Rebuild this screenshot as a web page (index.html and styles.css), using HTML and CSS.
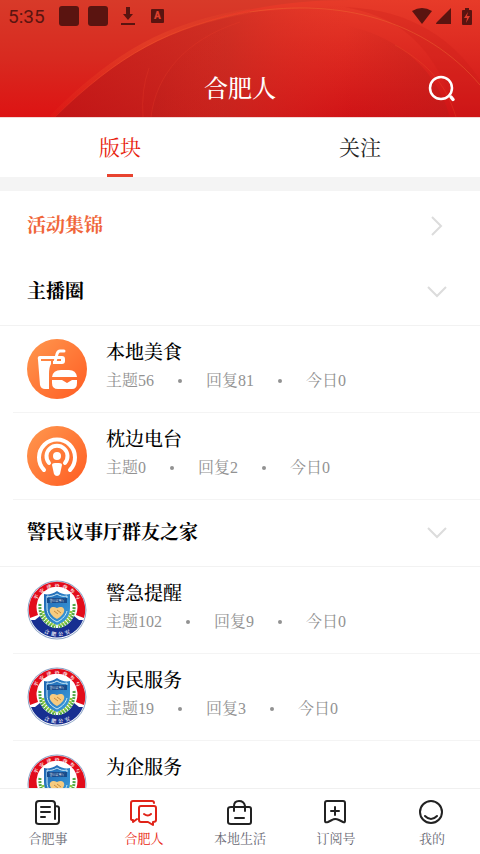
FILE: index.html
```html
<!DOCTYPE html>
<html lang="zh-CN">
<head>
  <meta charset="UTF-8">
  <meta name="viewport" content="width=device-width, initial-scale=1.0">
  <title>合肥人</title>
  <link rel="stylesheet" href="styles.css">
</head>
<body>
  <!-- Shared drawings -->
  <svg class="defs" width="0" height="0" aria-hidden="true">
    <defs>
      <linearGradient id="orange" x1="0" y1="0" x2="1" y2="1">
        <stop offset="0" stop-color="#ff984f"/>
        <stop offset="1" stop-color="#ff5c22"/>
      </linearGradient>
      <linearGradient id="shield" x1="0" y1="0" x2="1" y2="1">
        <stop offset="0" stop-color="#1c62b0"/>
        <stop offset="1" stop-color="#3da0dd"/>
      </linearGradient>
      <path id="arc-top" d="M7.500 30A22.500 22.500 0 0 1 52.500 30"/>
      <path id="arc-bottom" d="M4 30A26 26 0 0 0 56 30"/>
    </defs>
    <symbol id="badge" viewBox="0 0 60 60">
      <circle cx="30" cy="30" r="29.500" fill="#8ba3c6"/>
      <circle cx="30" cy="30" r="28.500" fill="#fff"/>
      <path d="M3 38A28.200 28.200 0 1 1 57 38L49 35A20.500 20.500 0 1 0 11 35Z" fill="#e20c1b"/>
      <path d="M4 40L8 40L13 36C20 52 40 52 47 36L52 40L56 40A28 28 0 0 1 4 40Z" fill="#172f91"/>
      <text class="badge-text"><textPath href="#arc-top" startOffset="50%">平&#160;&#160;安&#160;&#160;建&#160;&#160;设&#160;&#160;我&#160;&#160;参&#160;&#160;与</textPath></text>
      <text class="badge-text"><textPath href="#arc-bottom" startOffset="50%">合&#160;&#160;肥&#160;&#160;公&#160;&#160;安</textPath></text>
      <g fill="none" stroke-width="3" stroke-dasharray="2 1">
        <path d="M13 24C12 35 17 44 29 47" stroke="#4fa646"/>
        <path d="M47 24C48 35 43 44 31 47" stroke="#4fa646"/>
        <path d="M16 31C17 38 21 43 29 45" stroke="#8fc93c"/>
        <path d="M44 31C43 38 39 43 31 45" stroke="#8fc93c"/>
      </g>
      <path d="M30 11C26 14 21 15 17 14V28C17 37 22 42 30 45C38 42 43 37 43 28V14C39 15 34 14 30 11Z" fill="url(#shield)"/>
      <path d="M40 18V16C36 17 33 16 30 14C27 16 23 17 20 16V28C20 35 24 39 30 42C36 39 39 35 40 31" fill="none" stroke="#cdebf8"/>
      <path d="M20 18H40V23H20Z" fill="#174b8b"/>
      <text class="shield-text" x="30" y="22">警民议事厅</text>
      <path d="M30 39C18 32 23 24 30 28C37 24 42 32 30 39Z" fill="#f6cb80"/>
      <path d="M27 31L31 34M30 30L34 33" stroke="#c98b3c" stroke-width="1"/>
    </symbol>
    <symbol id="chevron-down" viewBox="0 0 20 12">
      <path d="M1 1L10 10L19 1" fill="none" stroke="#dcdcdc" stroke-width="2"/>
    </symbol>
  </svg>

  <div class="app">
    <header class="header">
      <svg class="header-bg" viewBox="0 0 480 117" preserveAspectRatio="none" aria-hidden="true">
        <defs>
          <linearGradient id="base" x1="0" y1="0" x2="0" y2="1">
            <stop offset="0" stop-color="#e73b29"/>
            <stop offset="1" stop-color="#d01316"/>
          </linearGradient>
          <linearGradient id="glow" x1="0" y1="0" x2="0" y2="1">
            <stop offset="0" stop-color="#d83a29"/>
            <stop offset="0.500" stop-color="#d82a20"/>
            <stop offset="1" stop-color="#dd1313"/>
          </linearGradient>
          <linearGradient id="dark" x1="0" y1="0" x2="1" y2="0">
            <stop offset="0" stop-color="#b81616" stop-opacity="0.600"/>
            <stop offset="0.400" stop-color="#c22c22" stop-opacity="0.600"/>
            <stop offset="0.700" stop-color="#e33024" stop-opacity="0"/>
          </linearGradient>
          <linearGradient id="inner" x1="0" y1="0" x2="1" y2="0">
            <stop offset="0" stop-color="#b5201c" stop-opacity="0.300"/>
            <stop offset="0.500" stop-color="#df2a20" stop-opacity="0"/>
          </linearGradient>
          <linearGradient id="shade" x1="0" y1="0" x2="1" y2="0">
            <stop offset="0" stop-color="#b51d1a" stop-opacity="0"/>
            <stop offset="1" stop-color="#b51d1a" stop-opacity="0.400"/>
          </linearGradient>
          <linearGradient id="edge" x1="0" y1="1" x2="1" y2="0">
            <stop offset="0" stop-color="#f04a26" stop-opacity="0.200"/>
            <stop offset="0.600" stop-color="#f4522a"/>
            <stop offset="1" stop-color="#f4522a" stop-opacity="0.300"/>
          </linearGradient>
        </defs>
        <rect width="480" height="117" fill="url(#base)"/>
        <path d="M0 0H350C210 0 125 48 55 117H0Z" fill="url(#glow)"/>
        <path d="M55 117C118 55 170 26 250 12L350 5H480V117Z" fill="url(#dark)"/>
        <path d="M52 117C115 54 168 24 250 11" fill="none" stroke="url(#edge)" stroke-width="5" opacity="0.350"/>
        <path d="M55 117C118 55 170 26 250 12" fill="none" stroke="url(#edge)" opacity="0.600"/>
        <path d="M151 117C156 70 195 30 250 18L310 8V117Z" fill="url(#inner)"/>
        <path d="M345 117V25C405 38 438 75 450 117Z" fill="url(#shade)"/>
        <path d="M400 28C432 50 448 85 456 117H480V80C455 42 415 10 345 7C370 12 385 18 400 28Z" fill="#c91a18" opacity="0.250"/>
        <path d="M250 12C340 -2 425 20 480 85" fill="none" stroke="#f07034" opacity="0.400"/>
        <path d="M395 45C430 65 446 85 456 117" fill="none" stroke="#f05b2c" opacity="0.250"/>
        <path d="M143 117Q141 90 149 68M151 117C156 75 185 40 240 22" fill="none" stroke="#e93c27" opacity="0.300"/>
      </svg>

      <div class="status">
        <div class="status-left">
          <span class="time">5:35</span>
          <i class="square"></i>
          <i class="square"></i>
          <svg width="14" height="18" viewBox="0 0 14 18"><path d="M5 0H9V7H12L7 13L2 7H5ZM0 16H14V18H0Z"/></svg>
          <span class="lang">A</span>
        </div>
        <div class="status-right">
          <svg width="20" height="16" viewBox="0 0 20 16"><path d="M0 3Q10-3 20 3L10 16Z"/></svg>
          <svg width="16" height="16" viewBox="0 0 16 16"><path d="M15 0V16H1Q-1 16 1 14Z"/></svg>
          <svg class="battery" width="10" height="17" viewBox="0 0 10 17"><path d="M3 0H7V2H9Q10 2 10 3V16Q10 17 9 17H1Q0 17 0 16V3Q0 2 1 2H3Z"/><path d="M6 4L2 10H5L4 15L8 8H5Z" fill="#dd3b2a"/></svg>
        </div>
      </div>

      <div class="title-bar">
        <h1>合肥人</h1>
        <button class="search" aria-label="搜索">
          <svg width="28" height="28" viewBox="0 0 28 28" fill="none" stroke="#fff"><circle cx="13" cy="13" r="11" stroke-width="2.500"/><path d="M23 22L25 24.500" stroke-width="3.500" stroke-linecap="round"/></svg>
        </button>
      </div>
    </header>

    <div class="tabs">
      <button class="tab active">版块</button>
      <button class="tab">关注</button>
    </div>

    <main class="content">
      <a class="group highlight" href="#">
        <h2>活动集锦</h2>
        <span class="arrow"><svg width="12" height="20" viewBox="0 0 12 20"><path d="M1 1L10 10L1 19" fill="none" stroke="#dcdcdc" stroke-width="2"/></svg></span>
      </a>

      <section>
        <button class="group">
          <h2>主播圈</h2>
          <span class="arrow"><svg width="20" height="12"><use href="#chevron-down"/></svg></span>
        </button>
        <a class="board" href="#">
          <svg class="board-icon" viewBox="0 0 60 60">
            <circle cx="30" cy="30" r="30" fill="url(#orange)"/>
            <path d="M37 12H33Q31 12 30 15L28 23" fill="none" stroke="#fff" stroke-width="3" stroke-linecap="round" stroke-linejoin="round"/>
            <path d="M13 17H35Q38 17 38 20V22Q38 25 35 25H26V22H34V20H14V22H24V25Q22 28 22 35V50H18Q14 50 13 46L11 21Q10 17 13 17Z" fill="#fff"/>
            <path d="M25 38Q26 31 34 31H42Q49 31 50 38Z" fill="#fff"/>
            <path d="M25 41H35L40 44L45 41H50V44Q50 50 45 50H31Q25 50 25 44Z" fill="#fff"/>
          </svg>
          <div class="board-info">
            <h3>本地美食</h3>
            <p><span>主题56</span><span>回复81</span><span>今日0</span></p>
          </div>
        </a>
        <a class="board" href="#">
          <svg class="board-icon" viewBox="0 0 60 60">
            <circle cx="30" cy="30" r="30" fill="url(#orange)"/>
            <g fill="none" stroke="#fff" stroke-width="4" stroke-linecap="round">
              <path d="M17 44A18 18 0 1 1 43 44"/>
              <path d="M22 37A10.500 10.500 0 1 1 38 37"/>
            </g>
            <circle cx="30" cy="30" r="4" fill="#fff"/>
            <path d="M25 39Q25 37 28 37H32Q35 37 35 39L33 48Q32 50 30 50Q28 50 27 48Z" fill="#fff"/>
          </svg>
          <div class="board-info">
            <h3>枕边电台</h3>
            <p><span>主题0</span><span>回复2</span><span>今日0</span></p>
          </div>
        </a>
      </section>

      <section>
        <button class="group">
          <h2>警民议事厅群友之家</h2>
          <span class="arrow"><svg width="20" height="12"><use href="#chevron-down"/></svg></span>
        </button>
        <a class="board" href="#">
          <svg class="board-icon"><use href="#badge"/></svg>
          <div class="board-info">
            <h3>警急提醒</h3>
            <p><span>主题102</span><span>回复9</span><span>今日0</span></p>
          </div>
        </a>
        <a class="board" href="#">
          <svg class="board-icon"><use href="#badge"/></svg>
          <div class="board-info">
            <h3>为民服务</h3>
            <p><span>主题19</span><span>回复3</span><span>今日0</span></p>
          </div>
        </a>
        <a class="board" href="#">
          <svg class="board-icon"><use href="#badge"/></svg>
          <div class="board-info">
            <h3>为企服务</h3>
          </div>
        </a>
      </section>
    </main>

    <nav class="bottom-nav">
      <a href="#">
        <svg viewBox="0 0 26 26"><path d="M20 19V4Q20 1 17 1H4Q1 1 1 4V22Q1 24 4 24H21Q24 24 24 21V8Q24 6 20 6M6 7H15M6 12H15M6 17H10"/></svg>
        <span>合肥事</span>
      </a>
      <a class="active" href="#">
        <svg viewBox="0 0 26 26"><path d="M23 3Q23 1 21 1H2Q0 1 0 3V19Q0 20 2 20V22L6 19M10 6H23Q25 6 25 8V20Q25 22 22 22V25L17 22H10Q8 22 8 20V8Q8 6 10 6ZM13 14Q17 17 20 14"/></svg>
        <span>合肥人</span>
      </a>
      <a href="#">
        <svg viewBox="0 0 26 26"><path d="M4 7H22Q24 7 24 9V22Q24 24 22 24H4Q1 24 1 22V9Q1 7 4 7ZM7 11V6Q7 1 12 1T18 6V11M8 18H17"/></svg>
        <span>本地生活</span>
      </a>
      <a href="#">
        <svg viewBox="0 0 26 26"><path d="M4 1H20Q22 1 22 3V21Q22 23 20 22L16 20Q12 18 9 20L5 22Q2 23 2 21V3Q2 1 4 1ZM12 7V15M8 11H16"/></svg>
        <span>订阅号</span>
      </a>
      <a href="#">
        <svg viewBox="0 0 26 26"><circle cx="12" cy="12" r="11"/><path d="M6 16Q12 22 18 16"/></svg>
        <span>我的</span>
      </a>
    </nav>
  </div>
</body>
</html>
```
FILE: styles.css
```css
* {
  margin: 0;
  padding: 0;
  box-sizing: border-box;
}

body {
  font-family: "Liberation Serif", "Noto Serif CJK SC", "Noto Sans CJK SC", serif;
  background: #fff;
  color: #000;
}

a {
  color: inherit;
  text-decoration: none;
}

button {
  border: none;
  background: none;
  font: inherit;
  color: inherit;
  cursor: pointer;
}

svg {
  display: block;
  flex-shrink: 0;
}

.defs {
  position: absolute;
}

.app {
  display: flex;
  flex-direction: column;
  height: 100vh;
}

/* Header */
.header {
  position: relative;
  flex-shrink: 0;
  padding-bottom: 4px;
  border-bottom: 1px solid #f4d8d6;
}

.header-bg {
  position: absolute;
  top: 0;
  left: 0;
  width: 100%;
  height: 100%;
}

.status {
  position: relative;
  display: flex;
  justify-content: space-between;
  align-items: center;
  height: 32px;
  padding: 0 8px;
  color: #5a1410;
  fill: #5a1410;
}

.status-left {
  display: flex;
  align-items: center;
}

.time {
  width: 51px;
  font-family: Roboto, sans-serif;
  font-size: 19px;
}

.square {
  width: 20px;
  height: 20px;
  margin-right: 9px;
  border-radius: 3px;
  background: #5a1410;
}

.status-left svg {
  margin-left: 4px;
}

.lang {
  width: 13px;
  margin-left: 16px;
  border-radius: 1px;
  background: #5a1410;
  color: #e0412f;
  font-family: Roboto, sans-serif;
  font-size: 10px;
  font-weight: 900;
  line-height: 14px;
  text-align: center;
}

.status-right {
  display: flex;
  align-items: center;
  gap: 4px;
}

.battery {
  margin-left: 6px;
}

.title-bar {
  position: relative;
  display: grid;
  grid-template-columns: 1fr auto 1fr;
  align-items: center;
  height: 81px;
  padding: 32px 24px 0;
}

h1 {
  grid-column: 2;
  color: #fff;
  font-size: 24px;
  font-weight: 500;
  line-height: 32px;
}

.search {
  justify-self: end;
}

/* Tabs */
.tabs {
  display: flex;
  flex-shrink: 0;
  height: 73px;
  border-bottom: 14px solid #f4f4f4;
}

.tab {
  position: relative;
  flex: 1;
  padding-bottom: 4px;
  color: #222;
  font-size: 21px;
}

.tab.active {
  color: #e81c0c;
}

.tab.active::after {
  content: '';
  position: absolute;
  bottom: 0;
  left: 50%;
  width: 26px;
  height: 3px;
  background: #e8432f;
  transform: translateX(-50%);
}

/* Board list */
.content {
  flex: 1;
  min-height: 0;
  padding-top: 1px;
  overflow-y: auto;
  scrollbar-width: none;
}

.group {
  display: flex;
  justify-content: space-between;
  align-items: center;
  width: 100%;
  height: 67px;
  padding: 0 33px 0 27px;
  text-align: left;
}

button.group {
  border-bottom: 1px solid #f2f2f2;
}

h2 {
  font-size: 19px;
  font-weight: 700;
  line-height: 28px;
}

.highlight {
  color: #f0663a;
}

.arrow {
  display: flex;
  justify-content: center;
  width: 20px;
}

.board {
  display: flex;
  gap: 19px;
  height: 87px;
  margin-left: 13px;
  padding: 13px 14px;
  border-bottom: 1px solid #f4f4f4;
}

.board-icon {
  width: 60px;
  height: 60px;
}

h3 {
  font-size: 19px;
  font-weight: 500;
  line-height: 28px;
}

.board-info p {
  display: flex;
  color: #929292;
  font-size: 16px;
  line-height: 28px;
}

.board-info span {
  display: flex;
  align-items: center;
}

.board-info span + span::before {
  content: '';
  width: 4px;
  height: 4px;
  margin: 0 24px;
  border-radius: 50%;
  background: #929292;
}

.badge-text {
  fill: #fff;
  font-size: 5px;
  font-weight: 700;
  text-anchor: middle;
}

.shield-text {
  fill: #fff;
  font-size: 3px;
  text-anchor: middle;
}

/* Bottom navigation */
.bottom-nav {
  display: flex;
  flex-shrink: 0;
  height: 66px;
  border-top: 1px solid #f0f0f0;
  background: #fff;
}

.bottom-nav a {
  display: flex;
  flex: 1;
  flex-direction: column;
  align-items: center;
  gap: 3px;
  padding-top: 11px;
  color: #686873;
  font-size: 13px;
  line-height: 20px;
}

.bottom-nav svg {
  width: 26px;
  height: 26px;
  overflow: visible;
  fill: none;
  stroke: #222;
  stroke-width: 2;
  stroke-linecap: round;
  stroke-linejoin: round;
}

.bottom-nav .active {
  color: #e81c0c;
}

.bottom-nav .active svg {
  stroke: #e02318;
}
```
